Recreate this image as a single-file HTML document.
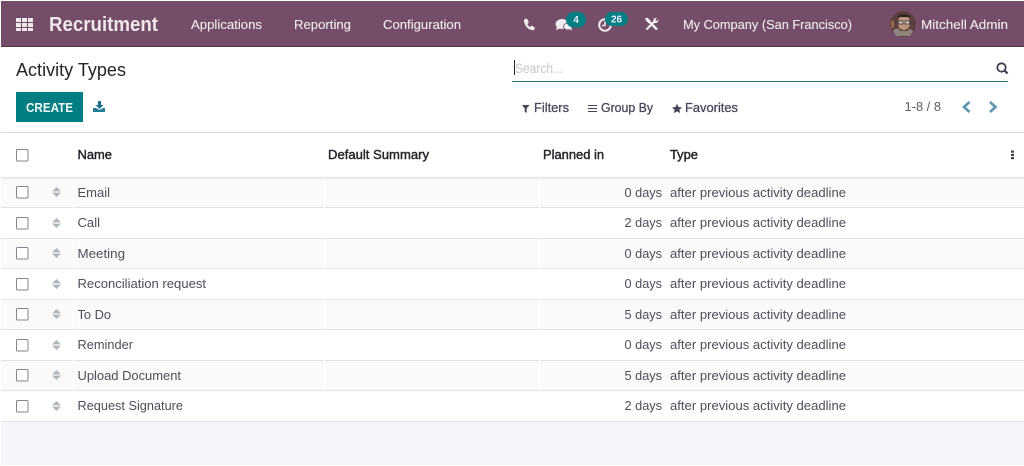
<!DOCTYPE html>
<html lang="en">
<head>
<meta charset="utf-8">
<title>Activity Types</title>
<style>
html,body{margin:0;padding:0;width:1024px;height:466px;overflow:hidden;background:#fff}
svg{display:block}
text{font-family:"Liberation Sans",Arial,sans-serif;font-size:13px;fill:#4c4f5a}
.nav{fill:#f0eaef;stroke:#f0eaef;stroke-width:.12}
.h{fill:#212529;font-size:12.5px;stroke:#212529;stroke-width:.4}
.f{fill:#46465a;stroke:#46465a;stroke-width:.28}
</style>
</head>
<body>
<svg width="1024" height="466" viewBox="0 0 1024 466" xmlns="http://www.w3.org/2000/svg">
<defs>
<g id="cb"><rect x="0.5" y="0.5" width="11.500" height="11.500" rx="1" fill="#fff" stroke="#85858e" stroke-width="1"/></g>
<g id="hd"><path d="M4.500 0L9 4.400H0Z M0 5.600H9L4.500 10Z" fill="#b0b6be"/></g>
</defs>
<rect width="1024" height="466" fill="#fff"/>

<!-- navbar -->
<rect x="1" y="1" width="1023" height="45" fill="#744d68"/>
<rect x="1" y="46" width="1023" height="1" fill="#4b3b4c"/>
<g fill="#efe9ee">
<rect x="16" y="18" width="5" height="4"/><rect x="22" y="18" width="5" height="4"/><rect x="28" y="18" width="5" height="4"/>
<rect x="16" y="23" width="5" height="4"/><rect x="22" y="23" width="5" height="4"/><rect x="28" y="23" width="5" height="4"/>
<rect x="16" y="28" width="5" height="3"/><rect x="22" y="28" width="5" height="3"/><rect x="28" y="28" width="5" height="3"/>
</g>
<text x="49" y="31" style="font-size:20px;font-weight:bold;fill:#eee7ec" textLength="109" lengthAdjust="spacingAndGlyphs">Recruitment</text>
<text x="191" y="29" class="nav" textLength="71" lengthAdjust="spacingAndGlyphs">Applications</text>
<text x="294" y="29" class="nav" textLength="57" lengthAdjust="spacingAndGlyphs">Reporting</text>
<text x="383" y="29" class="nav" textLength="78" lengthAdjust="spacingAndGlyphs">Configuration</text>

<!-- phone -->
<path d="M524 19.500l2.800-1 2.200 4-1.700 1.500c.7 1.500 1.600 2.400 3 3l1.500-1.500 3.200 2.200-1 2.400c-5.500 .8-10.500-5.200-10-10.600Z" fill="#f1ecf0"/>
<!-- chat -->
<ellipse cx="562" cy="24" rx="6.500" ry="5" fill="#f1ecf0"/>
<path d="M557 27l-1 3 4-1.500Z" fill="#f1ecf0"/>
<ellipse cx="568" cy="26.500" rx="4.500" ry="3.500" fill="#f1ecf0" stroke="#744d68" stroke-width=".8"/>
<path d="M570 29l2 2-.5-3Z" fill="#f1ecf0"/>
<rect x="566" y="12" width="20" height="15.500" rx="7.700" fill="#017e84"/>
<text x="576" y="23" text-anchor="middle" style="font-size:10px;font-weight:bold;fill:#eef">4</text>
<!-- clock -->
<circle cx="605" cy="25" r="5.800" fill="none" stroke="#f1ecf0" stroke-width="2"/>
<path d="M605 21.500V25.500H602" fill="none" stroke="#f1ecf0" stroke-width="1.500"/>
<rect x="605" y="12" width="23" height="14" rx="7" fill="#017e84"/>
<text x="616.500" y="22.500" text-anchor="middle" style="font-size:10px;font-weight:bold;fill:#eef">26</text>
<!-- tools -->
<path d="M649 21.500l8 8" stroke="#f6f2f5" stroke-width="2.400" fill="none"/>
<path d="M646.500 29.500l8-8" stroke="#f6f2f5" stroke-width="2" fill="none"/>
<path d="M645.500 18l2-.3 3.200 3.200-2.200 2.200-3.200-3.200Z M653.500 21.500c-.6-2 1-4 3.500-3.500l-1.800 1.800 1.400 1.400 1.800-1.800c.5 2.500-1.500 4-3.500 3.500Z" fill="#f6f2f5"/>
<text x="683" y="29" class="nav" textLength="169" lengthAdjust="spacingAndGlyphs">My Company (San Francisco)</text>
<!-- avatar -->
<circle cx="903" cy="24" r="13" fill="#5c4040"/>
<path d="M893 31c2-4 17-4 20 0l-3 5h-14Z" fill="#8f857c"/>
<ellipse cx="904" cy="23" rx="6" ry="8" fill="#b8957f"/>
<path d="M897 18c1-5 12-5 14 0l-2-1h-10Z" fill="#2c2220"/>
<path d="M898.500 21h4.500v3h-4.500Z M905 21h4.500v3h-4.500Z" fill="#d4c8c0" stroke="#3a2f2c" stroke-width=".7"/>
<path d="M899 27c3 4 7 4 10 0l-1 4h-8Z" fill="#5c4238"/>
<path d="M890.500 22l3-2 1 6-2.500 3Z" fill="#9a6a4a"/>
<text x="921" y="29" class="nav" textLength="87" lengthAdjust="spacingAndGlyphs">Mitchell Admin</text>

<!-- control panel -->
<text x="16" y="76" style="font-size:18px;fill:#212529" textLength="110" lengthAdjust="spacingAndGlyphs">Activity Types</text>
<rect x="16" y="92" width="67" height="30" fill="#017e84"/>
<text x="26" y="112" style="font-size:12.500px;font-weight:bold;fill:#f2f8f8" textLength="47" lengthAdjust="spacingAndGlyphs">CREATE</text>
<path d="M98 101h3v4h2.500L99.500 109 95.500 105H98Z" fill="#1d6f90"/>
<path d="M93 108h3l3.500 2 3.500-2h2v4H93Z" fill="#1f7f94"/>

<rect x="514" y="60" width="1" height="15" fill="#212529"/>
<text x="515" y="73" style="font-size:14px;fill:#c4c6ca" textLength="48" lengthAdjust="spacingAndGlyphs">Search...</text>
<rect x="512" y="81" width="496" height="1" fill="#2a7277"/>
<circle cx="1001.500" cy="67.500" r="4.200" fill="none" stroke="#3d3d50" stroke-width="1.800"/>
<path d="M1004.500 70.500l3 3" stroke="#3d3d50" stroke-width="2.200"/>

<path d="M522 105h7.500l-2.800 3.500v4.500l-2-1.200v-3.300Z" fill="#46465a"/>
<text x="534" y="112" class="f" textLength="35" lengthAdjust="spacingAndGlyphs">Filters</text>
<path d="M588 105.500h9M588 108.500h9M588 111.500h9" stroke="#46465a" stroke-width="1"/>
<text x="601" y="112" class="f" textLength="52" lengthAdjust="spacingAndGlyphs">Group By</text>
<path d="M677 103.800l1.500 3.200 3.500.4-2.600 2.300.7 3.400-3.100-1.700-3.100 1.700.7-3.400-2.600-2.300 3.500-.4Z" fill="#46465a"/>
<text x="685" y="112" class="f" textLength="53" lengthAdjust="spacingAndGlyphs">Favorites</text>
<text x="904.500" y="111" style="font-size:13px;fill:#5c5c66" textLength="36.500" lengthAdjust="spacingAndGlyphs">1-8 / 8</text>
<path d="M969.500 102l-5.500 5 5.500 5" fill="none" stroke="#5a97ad" stroke-width="2.600"/>
<path d="M990 102l5.500 5-5.500 5" fill="none" stroke="#5a97ad" stroke-width="2.600"/>

<!-- table -->
<rect x="1" y="132" width="1023" height="1" fill="#d8d6df"/>
<use href="#cb" x="16" y="149"/>
<text x="77.500" y="159" class="h" textLength="34.500" lengthAdjust="spacingAndGlyphs">Name</text>
<text x="328" y="159" class="h" textLength="101" lengthAdjust="spacingAndGlyphs">Default Summary</text>
<text x="543" y="159" class="h" textLength="61" lengthAdjust="spacingAndGlyphs">Planned in</text>
<text x="670" y="159" class="h" textLength="28" lengthAdjust="spacingAndGlyphs">Type</text>
<rect x="1011" y="150.500" width="3" height="2.200" fill="#444"/><rect x="1011" y="153.800" width="3" height="2.200" fill="#444"/><rect x="1011" y="157" width="3" height="2.200" fill="#444"/>

<!-- row backgrounds -->
<rect x="1" y="178" width="1023" height="29" fill="#fafafb"/>
<rect x="1" y="238" width="1023" height="30" fill="#fafafb"/>
<rect x="1" y="299" width="1023" height="30" fill="#fafafb"/>
<rect x="1" y="360" width="1023" height="30" fill="#fafafb"/>
<rect x="1" y="177" width="1023" height="1" fill="#e6e6ea"/>
<rect x="1" y="178" width="1023" height="1" fill="#eeeef0"/>
<rect x="1" y="179" width="1023" height="1" fill="#f5f5f6"/>
<g fill="#e3e3e6">
<rect x="1" y="207" width="1023" height="1"/><rect x="1" y="238" width="1023" height="1"/>
<rect x="1" y="268" width="1023" height="1"/><rect x="1" y="299" width="1023" height="1"/>
<rect x="1" y="329" width="1023" height="1"/><rect x="1" y="360" width="1023" height="1"/>
<rect x="1" y="390" width="1023" height="1"/><rect x="1" y="421" width="1023" height="1"/>
</g>
<g fill="#fff">
<rect x="73" y="178" width="1" height="243"/>
<rect x="324" y="178" width="1" height="243"/>
<rect x="539" y="178" width="1" height="243"/>
</g>
<rect x="1" y="422" width="1023" height="43" fill="#f5f6f9"/>

<!-- rows -->
<g><use href="#cb" x="16" y="186"/><use href="#hd" x="52" y="187"/><text x="77.500" y="197" textLength="32.500" lengthAdjust="spacingAndGlyphs">Email</text><text x="624.500" y="197" textLength="37.500" lengthAdjust="spacingAndGlyphs">0 days</text><text x="670" y="197" textLength="176" lengthAdjust="spacingAndGlyphs">after previous activity deadline</text></g>
<g><use href="#cb" x="16" y="217"/><use href="#hd" x="52" y="218"/><text x="77.500" y="227" textLength="22.500" lengthAdjust="spacingAndGlyphs">Call</text><text x="624.500" y="227" textLength="37.500" lengthAdjust="spacingAndGlyphs">2 days</text><text x="670" y="227" textLength="176" lengthAdjust="spacingAndGlyphs">after previous activity deadline</text></g>
<g><use href="#cb" x="16" y="247"/><use href="#hd" x="52" y="248"/><text x="77.500" y="258" textLength="47.500" lengthAdjust="spacingAndGlyphs">Meeting</text><text x="624.500" y="258" textLength="37.500" lengthAdjust="spacingAndGlyphs">0 days</text><text x="670" y="258" textLength="176" lengthAdjust="spacingAndGlyphs">after previous activity deadline</text></g>
<g><use href="#cb" x="16" y="278"/><use href="#hd" x="52" y="279"/><text x="77.500" y="288" textLength="128.500" lengthAdjust="spacingAndGlyphs">Reconciliation request</text><text x="624.500" y="288" textLength="37.500" lengthAdjust="spacingAndGlyphs">0 days</text><text x="670" y="288" textLength="176" lengthAdjust="spacingAndGlyphs">after previous activity deadline</text></g>
<g><use href="#cb" x="16" y="308"/><use href="#hd" x="52" y="309"/><text x="77.500" y="319" textLength="33.500" lengthAdjust="spacingAndGlyphs">To Do</text><text x="624.500" y="319" textLength="37.500" lengthAdjust="spacingAndGlyphs">5 days</text><text x="670" y="319" textLength="176" lengthAdjust="spacingAndGlyphs">after previous activity deadline</text></g>
<g><use href="#cb" x="16" y="339"/><use href="#hd" x="52" y="340"/><text x="77.500" y="349" textLength="55.500" lengthAdjust="spacingAndGlyphs">Reminder</text><text x="624.500" y="349" textLength="37.500" lengthAdjust="spacingAndGlyphs">0 days</text><text x="670" y="349" textLength="176" lengthAdjust="spacingAndGlyphs">after previous activity deadline</text></g>
<g><use href="#cb" x="16" y="369"/><use href="#hd" x="52" y="370"/><text x="77.500" y="380" textLength="103.500" lengthAdjust="spacingAndGlyphs">Upload Document</text><text x="624.500" y="380" textLength="37.500" lengthAdjust="spacingAndGlyphs">5 days</text><text x="670" y="380" textLength="176" lengthAdjust="spacingAndGlyphs">after previous activity deadline</text></g>
<g><use href="#cb" x="16" y="400"/><use href="#hd" x="52" y="401"/><text x="77.500" y="410" textLength="105.500" lengthAdjust="spacingAndGlyphs">Request Signature</text><text x="624.500" y="410" textLength="37.500" lengthAdjust="spacingAndGlyphs">2 days</text><text x="670" y="410" textLength="176" lengthAdjust="spacingAndGlyphs">after previous activity deadline</text></g>
</svg>
</body>
</html>
